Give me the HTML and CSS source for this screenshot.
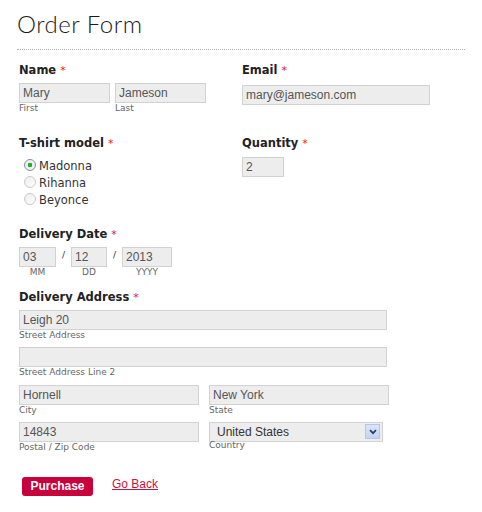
FILE: index.html
```html
<!DOCTYPE html>
<html lang="en">
<head>
<meta charset="utf-8">
<title>Order Form</title>
<link rel="stylesheet" href="styles.css">
</head>
<body>
<div class="page">
  <header class="head"><h1>Order Form</h1></header>
  <form class="form">
    <div class="row row-name">
      <div class="field">
        <div class="label">Name <span class="req">*</span></div>
        <div class="control pair">
          <div><input class="inp w-name" value="Mary"><span class="sub">First</span></div>
          <div><input class="inp w-name" value="Jameson"><span class="sub">Last</span></div>
        </div>
      </div>
      <div class="field">
        <div class="label">Email <span class="req">*</span></div>
        <div class="control control-email"><input class="inp w-email" value="mary@jameson.com"></div>
      </div>
    </div>

    <div class="row row-model">
      <div class="field">
        <div class="label">T-shirt model <span class="req">*</span></div>
        <div class="radios">
          <label class="opt"><input type="radio" class="radio" name="model" checked><span>Madonna</span></label>
          <label class="opt"><input type="radio" class="radio" name="model"><span>Rihanna</span></label>
          <label class="opt"><input type="radio" class="radio" name="model"><span>Beyonce</span></label>
        </div>
      </div>
      <div class="field">
        <div class="label">Quantity <span class="req">*</span></div>
        <div class="control control-qty"><input class="inp w-qty" value="2"></div>
      </div>
    </div>

    <div class="block row-date">
      <div class="label">Delivery Date <span class="req">*</span></div>
      <div class="control date">
        <div class="dpart"><input class="inp w-mm" value="03"><span class="sub center">MM</span></div>
        <span class="slash">/</span>
        <div class="dpart"><input class="inp w-dd" value="12"><span class="sub center">DD</span></div>
        <span class="slash">/</span>
        <div class="dpart"><input class="inp w-yy" value="2013"><span class="sub center">YYYY</span></div>
      </div>
    </div>

    <div class="block row-address">
      <div class="label">Delivery Address <span class="req">*</span></div>
      <div class="control"><input class="inp w-full" value="Leigh 20"><span class="sub">Street Address</span></div>
      <div class="addr-line"><input class="inp w-full" value=""><span class="sub">Street Address Line 2</span></div>
      <div class="addr-pair addr-city">
        <div><input class="inp w-half" value="Hornell"><span class="sub">City</span></div>
        <div><input class="inp w-half" value="New York"><span class="sub">State</span></div>
      </div>
      <div class="addr-pair addr-zip">
        <div><input class="inp w-half" value="14843"><span class="sub">Postal / Zip Code</span></div>
        <div>
          <div class="select"><span>United States</span><span class="arrow"><svg width="8" height="6" viewBox="0 0 8 6"><path d="M1 1.2 L4 4.2 L7 1.2" fill="none" stroke="#2b3f66" stroke-width="1.7"/></svg></span></div>
          <span class="sub sub-country">Country</span>
        </div>
      </div>
    </div>

    <div class="actions">
      <button type="button" class="btn">Purchase</button>
      <a href="#" class="link">Go Back</a>
    </div>
  </form>
</div>
</body>
</html>
```

FILE: styles.css
```css
body {
  margin: 0;
  background: #fff;
  font-family: "DejaVu Sans", Verdana, sans-serif;
  color: #1e1e1e;
}

.page {
  width: 448px;
  padding: 0 17px;
}

.head {
  padding: 9px 0 10px;
  border-bottom: 1px dotted #b0b0b0;
}

h1 {
  margin: 0;
  font: 300 24px/30px Lato, "Open Sans", sans-serif;
  letter-spacing: 0.5px;
  color: #1a1a1a;
}

.form {
  padding-left: 2px;
}

.row {
  display: grid;
  grid-template-columns: 223px 1fr;
}

.row-name { margin-top: 13px; }
.row-model { margin-top: 22px; }
.row-date { margin-top: 18px; }
.row-address { margin-top: 12px; }

.label {
  font-weight: bold;
  font-size: 11.5px;
  line-height: 14px;
  color: #222;
}

.req {
  color: #e2162e;
  font-weight: normal;
  font-size: 11px;
}

.control { margin-top: 5px; }
.control-email { margin-top: 7px; }
.control-qty { margin-top: 6px; }

.inp {
  display: block;
  box-sizing: border-box;
  height: 20px;
  margin: 0;
  padding: 0 3px;
  border: 1px solid #d2d2d2;
  background: #ededed;
  font: 12px "Liberation Sans", Arial, sans-serif;
  color: #555;
  outline: none;
}

.w-name { width: 91px; }
.w-email { width: 188px; }
.w-qty { width: 42px; }
.w-mm { width: 37px; }
.w-dd { width: 36px; }
.w-yy { width: 50px; }
.w-full { width: 368px; }
.w-half { width: 180px; }

.sub {
  display: block;
  font-size: 9px;
  line-height: 11px;
  color: #666;
}

.sub.center { text-align: center; }

.pair {
  display: flex;
  gap: 5px;
}

.radios {
  margin-top: 6px;
}

.opt {
  display: flex;
  align-items: center;
  height: 17.33px;
  font-size: 11.5px;
  color: #333;
}

.radio {
  appearance: none;
  -webkit-appearance: none;
  box-sizing: border-box;
  width: 12px;
  height: 12px;
  margin: 0 3px 2px 5px;
  border: 1px solid #cacaca;
  border-radius: 50%;
  background: linear-gradient(135deg, #ececec, #fff);
}

.radio:checked {
  border-color: #7f8ea3;
  background: radial-gradient(circle, #22b022 0, #22b022 2px, #eef2f5 2.6px);
}

.date {
  display: flex;
  align-items: flex-start;
}

.slash {
  width: 15px;
  text-align: center;
  font-size: 9px;
  line-height: 12px;
  margin-top: 2px;
  color: #333;
}

.addr-line { margin-top: 6px; }
.addr-city { margin-top: 7px; }
.addr-zip { margin-top: 6px; }

.addr-pair {
  display: flex;
  gap: 10px;
}

.select {
  box-sizing: border-box;
  width: 174px;
  height: 20px;
  display: flex;
  align-items: center;
  justify-content: space-between;
  padding: 0 2px 0 7px;
  border: 1px solid #d2d2d2;
  background: #ededed;
  font: 12px "Liberation Sans", Arial, sans-serif;
  color: #333;
}

.arrow {
  box-sizing: border-box;
  width: 15px;
  height: 15px;
  display: flex;
  align-items: center;
  justify-content: center;
  border: 1px solid #b5c6e6;
  background: linear-gradient(#dbe6fb, #c3d3f4);
}

.sub-country { margin-top: -2px; }

.actions {
  margin-top: 24px;
  display: flex;
  align-items: flex-start;
}

.btn {
  width: 71px;
  height: 19px;
  margin: 0 0 0 3px;
  padding: 0;
  border: 0;
  border-radius: 3px;
  background: #c8003c;
  color: #fff;
  font: bold 12px/19px "Liberation Sans", Arial, sans-serif;
}

.link {
  margin-left: 19px;
  font: 12px/14px "Liberation Sans", Arial, sans-serif;
  color: #c4143f;
  text-decoration: underline;
}
```
